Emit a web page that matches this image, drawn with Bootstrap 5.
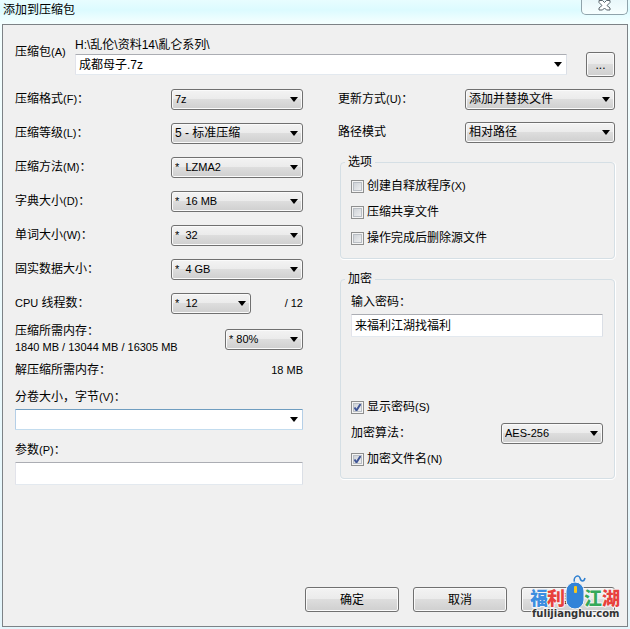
<!DOCTYPE html>
<html lang="zh-CN">
<head>
<meta charset="utf-8">
<meta name="viewport" content="width=device-width, initial-scale=1">
<title>添加到压缩包</title>
<link href="https://cdn.jsdelivr.net/npm/bootstrap@5.3.0/dist/css/bootstrap.min.css" rel="stylesheet">
<style>
body{font:12px/16px "Liberation Sans","Noto Sans CJK SC",sans-serif;color:#000;background:linear-gradient(#e8fdff 0,#dcfbff 10px,#f3ffff 22px,#e4f5fb 100%)}
.en{font-size:11px}
.titlebar{height:24px;padding-left:3px}
.titlebar h1{font-size:12px;line-height:20px;font-weight:400}
.close-box{width:47px;height:15px;border:1px solid #8fa3ab;border-top:0;border-radius:0 0 5px 5px;background:linear-gradient(#e9f7fa,#f6ffff);padding:0;margin-right:2px}
.dialog{margin:0 2px 2px;border:1px solid #7d8286;background:#f0f0f0;padding:12px 12px 14px}
.head-label{width:60px;padding-top:7px}
.cols{display:grid;grid-template-columns:288fr 277fr;column-gap:35px;margin-top:5px}
.line{min-height:34px}
.line-sm{min-height:26px}
.line-path{min-height:32px;margin-bottom:6px}
select.win{height:21px;font-size:12px;line-height:16px;padding:0 18px 0 3px;border:1px solid #707070;border-radius:3px;color:#000;appearance:none;
background:url("data:image/svg+xml,%3Csvg xmlns='http://www.w3.org/2000/svg' width='8' height='5'%3E%3Cpath d='M0 0h8L4 5z'/%3E%3C/svg%3E") no-repeat right 4px center,linear-gradient(#f3f3f3 0,#ebebeb 48%,#dddddd 50%,#cfcfcf 100%);box-shadow:inset 0 0 0 1px #fafafa}
select.en{font-size:11px}
select.edit{background:#fff url("data:image/svg+xml,%3Csvg xmlns='http://www.w3.org/2000/svg' width='8' height='5'%3E%3Cpath d='M0 0h8L4 5z'/%3E%3C/svg%3E") no-repeat right 4px center;border-color:#abadb3 #dbdfe6 #e3e9ef #e2e3ea;border-radius:1px;box-shadow:none}
select.hot{border-color:#6f9dc0 #b5cfe7 #c3dcee #b5cfe7}
select.arc{margin-top:1px}
input.field{height:23px;border:1px solid;border-color:#abadb3 #dbdfe6 #e3e9ef #e2e3ea;border-radius:1px;padding:0 3px 2px;background:#fff;color:#000}
.w-a{width:132px}.w-b{width:80px}.w-c{width:78px}.w-d{width:150px}.w-e{width:102px}
.btn-win{height:25px;width:94px;font-size:12px;line-height:16px;border:1px solid #707070;border-radius:3px;color:#000;padding:0;background:linear-gradient(#f3f3f3 0,#ebebeb 48%,#dddddd 50%,#cfcfcf 100%);box-shadow:inset 0 0 0 1px #fafafa}
.btn-dots{width:29px;margin:15px 0 0 19px}
.actions{gap:14px}
.group{border:1px solid #d5dfe5;border-radius:4px;padding:3px 11px 7px 10px;box-shadow:0 1px 0 #fff,1px 0 0 #fff;margin:0 0 12px 2px}
.group legend{float:none;width:auto;font-size:12px;line-height:16px;margin:0 0 0 -6px;padding:0 3px}
.crypto{padding-top:7px;padding-bottom:6px}
.tick{appearance:none;width:13px;height:13px;margin:0 3px 0 0;border:1px solid #8e8f8f;box-shadow:inset 0 0 0 1px #f4f4f4,inset 0 0 0 2px #b9bec4;background:linear-gradient(135deg,#c6cbd1,#f6f6f6)}
.tick:checked{background:url("data:image/svg+xml,%3Csvg xmlns='http://www.w3.org/2000/svg' width='11' height='11'%3E%3Cpath d='M2.500 5.500l2 3L8.500 2' fill='none' stroke='%233f5596' stroke-width='2'/%3E%3C/svg%3E") no-repeat,linear-gradient(135deg,#c6cbd1,#f6f6f6)}
.mem{margin-top:3px}
.mem-out{margin-top:7px;margin-bottom:11px}
.pass-gap{margin-bottom:57px}
.brand{position:absolute;right:7px;bottom:4px;width:90px;pointer-events:none}
.brand text{paint-order:stroke;stroke-linejoin:round}
</style>
<script src="https://cdn.jsdelivr.net/npm/bootstrap@5.3.0/dist/js/bootstrap.bundle.min.js"></script>
</head>
<body class="min-vh-100 d-flex flex-column">
<header class="titlebar d-flex justify-content-between align-items-start">
  <h1 class="m-0">添加到压缩包</h1>
  <button class="close-box d-flex justify-content-center" type="button" aria-label="关闭">
    <svg width="13" height="11" viewBox="0 0 13 11"><path d="M1 .5h3.500l2 2 2-2H12v2L9 5.500l3 2.500v2H8.500l-2-2-2 2H1V8l3-2.500-3-3z" fill="#fff" stroke="#59636b"/></svg>
  </button>
</header>
<form class="dialog position-relative flex-grow-1 d-flex flex-column">
  <div class="d-flex">
    <label class="head-label" for="arc">压缩包<span class="en">(A)</span></label>
    <div class="flex-grow-1">
      <div>H:\乱伦\资料14\亂仑系列\</div>
      <select id="arc" class="win edit arc w-100 d-block"><option>成都母子.7z</option></select>
    </div>
    <button type="button" class="btn-win btn-dots">...</button>
  </div>
  <div class="cols">
    <section>
      <div class="line d-flex align-items-center justify-content-between"><label for="fmt">压缩格式<span class="en">(F)</span>：</label><select id="fmt" class="win en w-a"><option>7z</option></select></div>
      <div class="line d-flex align-items-center justify-content-between"><label for="lvl">压缩等级<span class="en">(L)</span>：</label><select id="lvl" class="win w-a"><option>5 - 标准压缩</option></select></div>
      <div class="line d-flex align-items-center justify-content-between"><label for="mtd">压缩方法<span class="en">(M)</span>：</label><select id="mtd" class="win en w-a"><option>*&nbsp; LZMA2</option></select></div>
      <div class="line d-flex align-items-center justify-content-between"><label for="dic">字典大小<span class="en">(D)</span>：</label><select id="dic" class="win en w-a"><option>*&nbsp; 16 MB</option></select></div>
      <div class="line d-flex align-items-center justify-content-between"><label for="wrd">单词大小<span class="en">(W)</span>：</label><select id="wrd" class="win en w-a"><option>*&nbsp; 32</option></select></div>
      <div class="line d-flex align-items-center justify-content-between"><label for="sld">固实数据大小：</label><select id="sld" class="win en w-a"><option>*&nbsp; 4 GB</option></select></div>
      <div class="line d-flex align-items-center justify-content-between"><label for="cpu"><span class="en">CPU</span> 线程数：</label><div class="w-a d-flex align-items-center justify-content-between"><select id="cpu" class="win en w-b"><option>*&nbsp; 12</option></select><span class="en">/ 12</span></div></div>
      <div class="mem d-flex align-items-center justify-content-between"><label for="pct">压缩所需内存：<span class="en d-block">1840 MB / 13044 MB / 16305 MB</span></label><select id="pct" class="win en w-c"><option>* 80%</option></select></div>
      <div class="mem-out d-flex justify-content-between"><span>解压缩所需内存：</span><span class="en">18 MB</span></div>
      <label class="d-block mb-1" for="vol">分卷大小，字节<span class="en">(V)</span>：</label>
      <select id="vol" class="win edit hot w-100 d-block"><option></option></select>
      <label class="d-block mt-2 pt-1 mb-1" for="par">参数<span class="en">(P)</span>：</label>
      <input id="par" class="field w-100 d-block" type="text">
    </section>
    <section>
      <div class="line d-flex align-items-center justify-content-between"><label for="upd">更新方式<span class="en">(U)</span>：</label><select id="upd" class="win w-d"><option>添加并替换文件</option></select></div>
      <div class="line-path d-flex align-items-center justify-content-between"><label for="pth">路径模式</label><select id="pth" class="win w-d"><option>相对路径</option></select></div>
      <fieldset class="group">
        <legend>选项</legend>
        <div class="line-sm d-flex align-items-center"><input class="tick" id="sfx" type="checkbox"><label for="sfx">创建自释放程序<span class="en">(X)</span></label></div>
        <div class="line-sm d-flex align-items-center"><input class="tick" id="shr" type="checkbox"><label for="shr">压缩共享文件</label></div>
        <div class="line-sm d-flex align-items-center"><input class="tick" id="del" type="checkbox"><label for="del">操作完成后删除源文件</label></div>
      </fieldset>
      <fieldset class="group crypto">
        <legend>加密</legend>
        <label class="d-block mb-1" for="pwd">输入密码：</label>
        <input id="pwd" class="field w-100 d-block pass-gap" type="text" value="来福利江湖找福利">
        <div class="line-sm d-flex align-items-center"><input class="tick" id="shw" type="checkbox" checked><label for="shw">显示密码<span class="en">(S)</span></label></div>
        <div class="line-sm d-flex align-items-center justify-content-between"><label for="alg">加密算法：</label><select id="alg" class="win en w-e"><option>AES-256</option></select></div>
        <div class="line-sm d-flex align-items-center"><input class="tick" id="enc" type="checkbox" checked><label for="enc">加密文件名<span class="en">(N)</span></label></div>
      </fieldset>
    </section>
  </div>
  <footer class="actions mt-auto d-flex justify-content-end">
    <button type="button" class="btn-win">确定</button>
    <button type="button" class="btn-win">取消</button>
    <button type="button" class="btn-win">帮助</button>
  </footer>
  <svg class="brand" viewBox="0 0 90 48" role="img" aria-label="福利江湖 fulijianghu.com">
    <g font-family="'Noto Sans CJK SC',sans-serif" font-weight="900" font-size="18" stroke="#f4f4f4" stroke-width="2">
      <text x="0" y="31" fill="#3d8ee0">福</text><text x="17" y="31" fill="#e8413c">利</text>
      <text x="54" y="31" fill="#35a95a">江</text><text x="72" y="31" fill="#e8413c">湖</text>
    </g>
    <path d="M45 10C42 2 49 0 50 4s4 4 5 0" fill="none" stroke="#2d7fd0" stroke-width="1.500"/>
    <rect x="36" y="8" width="18" height="27" rx="9" fill="#3384d8" stroke="#f4f4f4"/><rect x="44" y="12" width="3" height="7" rx="1" fill="#f8c81c"/>
    <text x="2" y="43" font-family="'DejaVu Sans',sans-serif" font-weight="700" font-size="10" fill="#333" stroke="#f4f4f4" stroke-width="2">fulijianghu.com</text>
  </svg>
</form>
</body>
</html>
